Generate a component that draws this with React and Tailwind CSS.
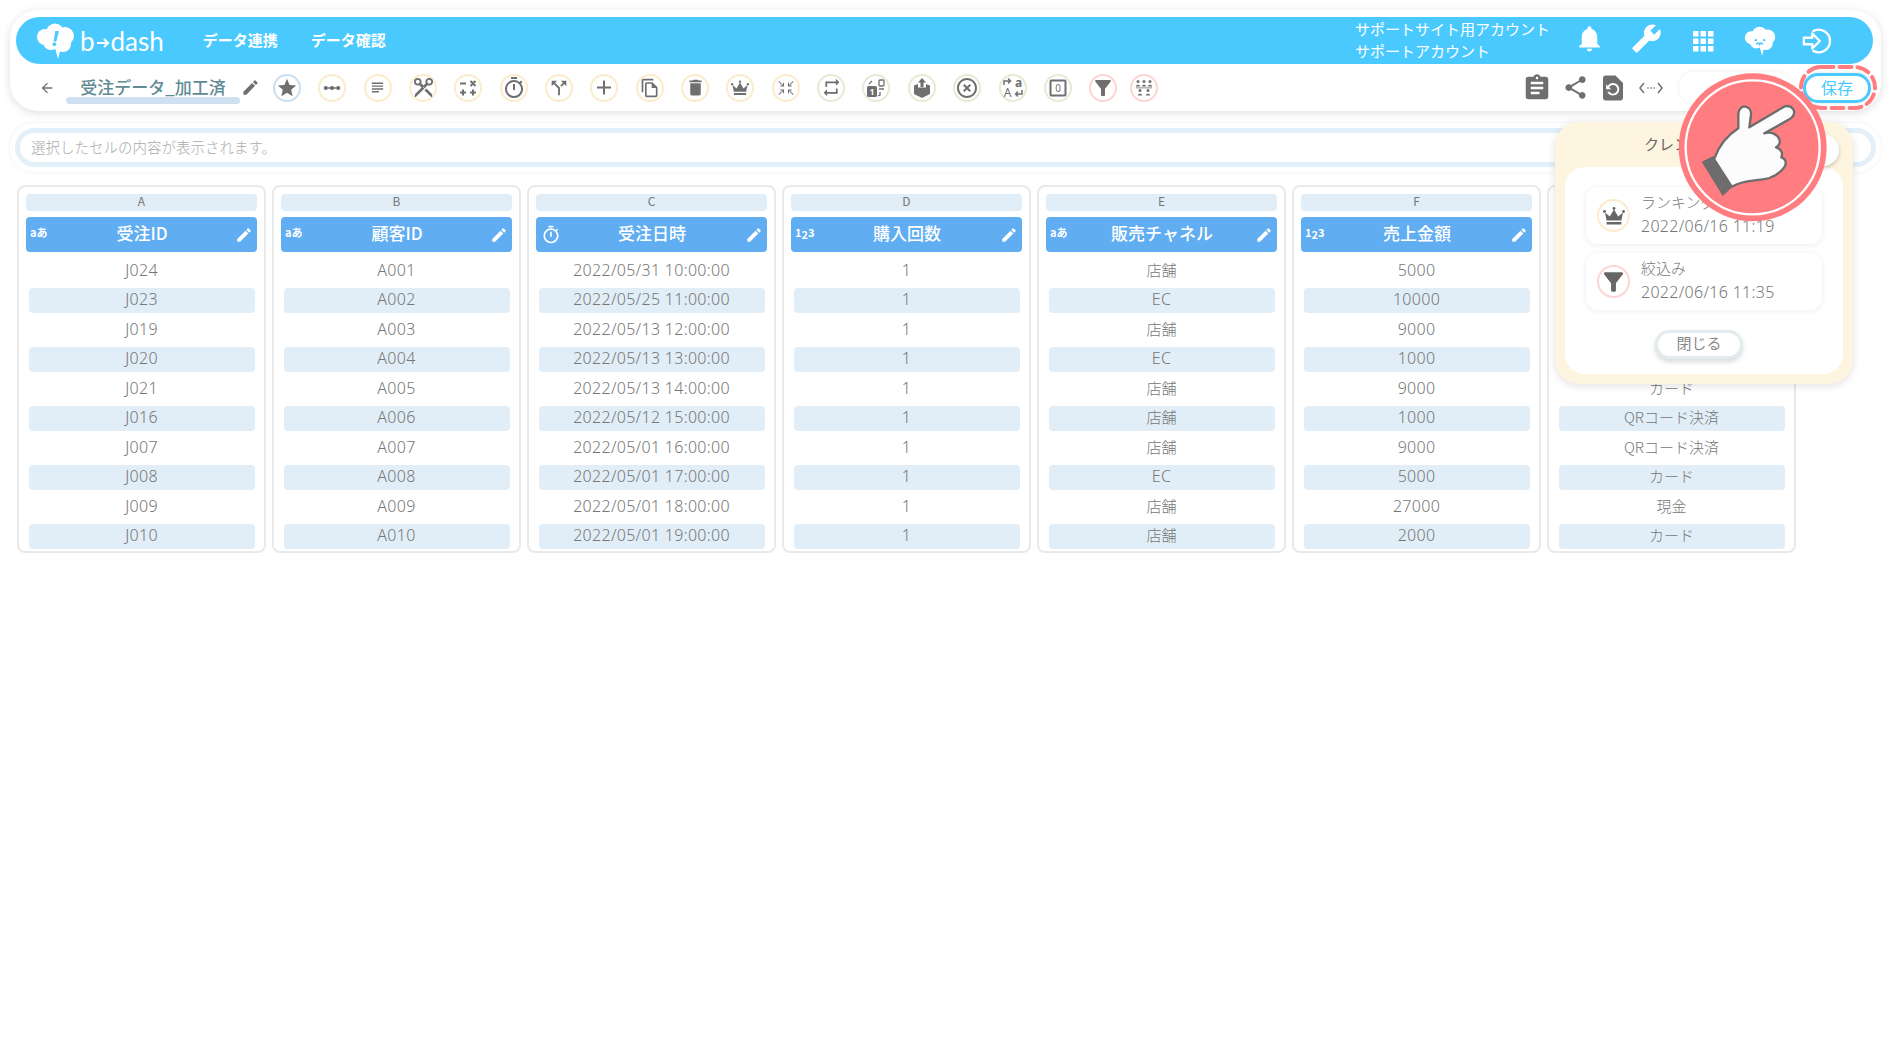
import {
  MdAdd,
  MdArrowBack,
  MdAssignment,
  MdBuild,
  MdCallSplit,
  MdDelete,
  MdEdit,
  MdFilterAlt,
  MdHighlightOff,
  MdLinearScale,
  MdNotifications,
  MdOutlineContentCut,
  MdOutlineFileCopy,
  MdOutlineTimer,
  MdRepeat,
  MdRestorePage,
  MdShare,
  MdStar,
  MdSubject,
} from "react-icons/md";

const Crown = ({ size = 20 }) => (
  <svg width={size} height={size} viewBox="0 0 24 24" fill="currentColor">
    <circle cx="2.5" cy="7.5" r="1.4" />
    <circle cx="12" cy="4.5" r="1.4" />
    <circle cx="21.5" cy="7.5" r="1.4" />
    <path d="M3 8.5l4.8 4L12 5.5l4.2 7 4.8-4-1.6 8H4.6zM4.6 18h14.8v2.4H4.6z" />
  </svg>
);

const Calc = () => (
  <svg width="20" height="20" viewBox="0 0 20 20" stroke="currentColor" strokeWidth="2" fill="none">
    <path d="M2 5.5h6M12.5 3l5 5M17.500 3l-5 5M5 11.500v6M2 14.500h6M15 11.500v6M12 14.500h6" />
  </svg>
);

const Compress = () => (
  <svg width="18" height="18" viewBox="0 0 18 18" fill="currentColor">
    <path d="M2 2l4 4V3.500l1 .5v3.500H3.500L3 6.500h2.500L1.500 3zM16 2l-4 4V3.500l-1 .5v3.500h3.500l.5-1h-2.500l4-3.500zM2 16l4-4v2.500l1-.5v-3.500H3.500l-.5 1h2.500l-4 3.500zM16 16l-4-4v2.500l-1-.5v-3.500h3.500l.5 1h-2.500l4 3.500z" />
  </svg>
);

const LockSwap = () => (
  <svg width="20" height="20" viewBox="0 0 20 20" fill="none">
    <rect x="1" y="8" width="10" height="11" rx="1.500" fill="currentColor" />
    <text x="6" y="16.500" textAnchor="middle" fontSize="8" fontWeight="700" fill="#fff" fontFamily="Noto Sans">1</text>
    <rect x="13" y="2" width="5" height="6" rx="1" stroke="currentColor" strokeWidth="1.300" />
    <path d="M3 6l3-3M14 14v3l-2 1M13 11h5" stroke="currentColor" strokeWidth="1.300" />
  </svg>
);

const BoxUp = () => (
  <svg width="22" height="22" viewBox="0 0 22 22" fill="currentColor">
    <path d="M11 1l4 4.500h-2.500V10h-3V5.500H7z" />
    <path d="M3 8.500l4-1.500v3.500h8V7l4 1.500V17l-8 4-8-4z" />
  </svg>
);

const Translate = () => (
  <svg width="24" height="24" viewBox="0 0 24 24" fill="none">
    <text x="6.500" y="21" textAnchor="middle" fontSize="12" fontFamily="Noto Sans" fill="currentColor">A</text>
    <text x="17.500" y="10.500" textAnchor="middle" fontSize="12" fontWeight="700" fontFamily="Noto Sans" fill="currentColor">a</text>
    <path d="M3 9V5h6M7 2.500L9.500 5 7 7.500M21 14v4h-6M17 15.500L14.500 18l2.500 2.500" stroke="currentColor" strokeWidth="1.500" />
  </svg>
);

const ZeroBox = () => (
  <svg width="20" height="20" viewBox="0 0 20 20" fill="none">
    <rect x="2.500" y="2.500" width="15" height="15" rx="1" stroke="currentColor" strokeWidth="2" />
    <text x="10" y="14" textAnchor="middle" fontSize="10" fontFamily="Noto Sans" fill="currentColor">0</text>
  </svg>
);

const People = () => (
  <svg width="18" height="18" viewBox="0 0 18 18" fill="currentColor">
    {[3, 9, 15].map((x) => (
      <g key={x}>
        <circle cx={x} cy="2.500" r="1.500" />
        <path d={`M${x - 2.2} 7.500c0-2.400 4.400-2.400 4.400 0z`} />
      </g>
    ))}
    <path d="M1 8.500h16v.8H1z" />
    {[5, 13].map((x) => (
      <g key={x}>
        <circle cx={x} cy="11.500" r="1.500" />
        <path d={`M${x - 2.2} 16.500c0-2.400 4.400-2.400 4.400 0z`} />
      </g>
    ))}
  </svg>
);

const Code = () => (
  <svg width="26" height="20" viewBox="0 0 26 20" fill="none" stroke="currentColor" strokeWidth="1.500">
    <path d="M6 5l-4 5 4 5M20 5l4 5-4 5" />
    <path d="M9.500 10h1M12.500 10h1M15.500 10h1" strokeWidth="2" />
  </svg>
);

const Grid = () => (
  <svg width="22" height="22" viewBox="0 0 22 22" fill="currentColor">
    {[1, 8.500, 16].map((x) =>
      [1, 8.500, 16].map((y) => <rect key={`${x}-${y}`} x={x} y={y} width="5.500" height="5.500" />),
    )}
  </svg>
);

const SignIn = () => (
  <svg width="34" height="30" viewBox="0 0 34 30" fill="none" stroke="currentColor" strokeWidth="2.500">
    <path d="M13 4.500a12 12 0 1 1 0 21" strokeLinecap="round" />
    <path d="M3 11.500h9V7l8 8-8 8v-4.500H3z" strokeLinejoin="round" />
  </svg>
);

const Cloud = ({ face }) => (
  <svg width="39" height="36" viewBox="0 0 39 36" fill="#fff">
    <circle cx="9" cy="14" r="8" />
    <circle cx="19" cy="9.500" r="9" />
    <circle cx="29" cy="13" r="9" />
    <circle cx="27" cy="21" r="8" />
    <circle cx="15" cy="19" r="8" />
    <path d="M19 25h6l-3 11z" />
    {face ? (
      <path d="M13 17h3M23 17h3M15 22c3-2 3-2 4 0 1-2 1-2 4 0" stroke="#4ac9ff" strokeWidth="2" fill="none" />
    ) : (
      <text x="19" y="23" textAnchor="middle" fontSize="21" fontWeight="700" fontStyle="italic" fontFamily="Noto Sans" fill="#4ac9ff">!</text>
    )}
  </svg>
);

const tools = [
  { ring: "border-[#c9dff1]", icon: <MdStar size={22} /> },
  { ring: "border-[#fbeccb]", icon: <MdLinearScale size={20} /> },
  { ring: "border-[#fbeccb]", icon: <MdSubject size={17} /> },
  { ring: "border-[#fbeccb]", icon: <MdOutlineContentCut size={23} className="rotate-90" /> },
  { ring: "border-[#fbeccb]", icon: <Calc /> },
  { ring: "border-[#fbeccb]", icon: <MdOutlineTimer size={24} /> },
  { ring: "border-[#fbeccb]", icon: <MdCallSplit size={22} /> },
  { ring: "border-[#fbeccb]", icon: <MdAdd size={25} /> },
  { ring: "border-[#fbeccb]", icon: <MdOutlineFileCopy size={20} /> },
  { ring: "border-[#fbeccb]", icon: <MdDelete size={21} /> },
  { ring: "border-[#fbeccb]", icon: <Crown /> },
  { ring: "border-[#fbeccb]", icon: <Compress /> },
  { ring: "border-[#e4ecd5]", icon: <MdRepeat size={21} /> },
  { ring: "border-[#e4ecd5]", icon: <LockSwap /> },
  { ring: "border-[#e4ecd5]", icon: <BoxUp /> },
  { ring: "border-[#e4ecd5]", icon: <MdHighlightOff size={24} /> },
  { ring: "border-[#e4ecd5]", icon: <Translate /> },
  { ring: "border-[#e4ecd5]", icon: <ZeroBox /> },
  { ring: "border-[#fdd5d5]", icon: <MdFilterAlt size={26} /> },
];

const dates = [
  "2022/05/31 10:00:00",
  "2022/05/25 11:00:00",
  "2022/05/13 12:00:00",
  "2022/05/13 13:00:00",
  "2022/05/13 14:00:00",
  "2022/05/12 15:00:00",
  "2022/05/01 16:00:00",
  "2022/05/01 17:00:00",
  "2022/05/01 18:00:00",
  "2022/05/01 19:00:00",
];

const columns = [
  { letter: "A", title: "受注ID", type: "text", rows: ["J024", "J023", "J019", "J020", "J021", "J016", "J007", "J008", "J009", "J010"] },
  { letter: "B", title: "顧客ID", type: "text", rows: ["A001", "A002", "A003", "A004", "A005", "A006", "A007", "A008", "A009", "A010"] },
  { letter: "C", title: "受注日時", type: "date", rows: dates },
  { letter: "D", title: "購入回数", type: "num", rows: ["1", "1", "1", "1", "1", "1", "1", "1", "1", "1"] },
  { letter: "E", title: "販売チャネル", type: "text", rows: ["店舗", "EC", "店舗", "EC", "店舗", "店舗", "店舗", "EC", "店舗", "店舗"] },
  { letter: "F", title: "売上金額", type: "num", rows: ["5000", "10000", "9000", "1000", "9000", "1000", "9000", "5000", "27000", "2000"] },
  { letter: "G", title: "決済方法", type: "text", rows: ["カード", "現金", "カード", "現金", "カード", "QRコード決済", "QRコード決済", "カード", "現金", "カード"] },
];

function TypeMark({ type }) {
  if (type === "date") return <MdOutlineTimer size={20} />;
  if (type === "num") {
    return (
      <span className="-ml-px -mt-1 text-[11px] font-bold leading-none">
        1<span className="inline-block translate-y-[2px]">2</span>3
      </span>
    );
  }
  return <span className="-ml-px -mt-1 text-[11px] font-bold leading-none">aあ</span>;
}

function Column({ col }) {
  return (
    <div className="w-[249px] shrink-0 rounded-lg border-2 border-[#e9e9e9] bg-white px-[7px] pt-[7px]">
      <div className="flex h-[17px] items-center justify-center rounded-sm bg-[#e1eef8] pb-[3px] text-xs leading-none text-[#777]">
        {col.letter}
      </div>
      <div className="mt-[6px] flex h-[35px] items-center rounded bg-[#60adf2] pl-[5px] pr-[4px] text-white">
        <div className="flex w-[28px] items-center">
          <TypeMark type={col.type} />
        </div>
        <div className="flex-1 pb-[3px] text-center text-[17px] font-medium">{col.title}</div>
        <div className="flex w-[28px] justify-end">
          <MdEdit size={18} />
        </div>
      </div>
      <div className="mt-1">
        {col.rows.map((value, i) => (
          <div key={i} className="flex h-[29.5px] items-center">
            <div
              className={`mx-[2.500px] flex h-[25px] w-full items-center justify-center rounded pb-[2px] font-light text-[#777] ${
                /^[\x00-\x7f]+$/.test(value)
                  ? "font-['Noto_Sans','Noto_Sans_CJK_JP',sans-serif] text-[16px] tracking-[0.3px]"
                  : "text-[15px]"
              } ${i % 2 === 1 ? "bg-[#e1eef8]" : ""}`}
            >
              {value}
            </div>
          </div>
        ))}
      </div>
    </div>
  );
}

function HistoryItem({ ring, icon, label, date }) {
  return (
    <div className="flex h-[57px] items-center rounded-xl bg-white pl-[11px] shadow-[0_1px_6px_rgba(0,0,0,0.08)]">
      <div className={`flex h-[33px] w-[33px] items-center justify-center rounded-full border-2 bg-white text-[#666] ${ring}`}>
        {icon}
      </div>
      <div className="-mt-[4px] ml-[11px] text-[15px] font-light leading-[24px] text-[#777]">
        <div>{label}</div>
        <div className="font-['Noto_Sans','Noto_Sans_CJK_JP',sans-serif] text-[16px] tracking-[0.3px]">{date}</div>
      </div>
    </div>
  );
}

export default function App() {
  return (
    <div className="relative h-[1063px] overflow-hidden bg-white pl-[10px] pr-[9px] pt-[10px] font-['Noto_Sans_CJK_JP','Noto_Sans',sans-serif]">
      {/* header card */}
      <div className="rounded-[28px] bg-white pl-[6px] pr-[8px] pt-[7px] shadow-[0_2px_10px_rgba(0,0,0,0.13)]">
        <div className="flex h-[47px] items-center rounded-full bg-[#4ac9ff] pl-[20px] pr-[40px] text-white">
          <Cloud />
          <div className="ml-[5px] flex items-center font-['Lato',sans-serif] text-[26px] leading-none">
            b
            <svg width="14" height="12" viewBox="0 0 14 12" fill="none" stroke="#fff" strokeWidth="2" className="mx-px mt-1">
              <path d="M1 6h11M8 2l4 4-4 4" />
            </svg>
            dash
          </div>
          <div className="ml-[39px] flex gap-[33px] text-[15px] font-bold">
            <span>データ連携</span>
            <span>データ確認</span>
          </div>
          <div className="ml-auto pb-[2px] text-[15px] leading-[22px]">
            <div>サポートサイト用アカウント</div>
            <div>サポートアカウント</div>
          </div>
          <div className="ml-[23px] flex gap-[25px]">
            <div className="flex w-[32px] justify-center"><MdNotifications size={31} /></div>
            <div className="flex w-[32px] justify-center"><MdBuild size={31} className="-scale-x-100" /></div>
            <div className="flex w-[32px] items-center justify-center"><Grid /></div>
            <div className="flex w-[32px] items-center justify-center"><Cloud face /></div>
            <div className="flex w-[32px] items-center justify-center"><SignIn /></div>
          </div>
        </div>

        {/* toolbar */}
        <div className="flex h-[47px] items-center text-[#6f6f6f]">
          <MdArrowBack size={16} className="ml-[23px]" />
          <div className="ml-[11px] mt-[5px] w-[174px] text-center">
            <div className="text-[17px] font-medium leading-[19px] text-[#5f8b96]">受注データ_加工済</div>
            <div className="mt-px h-[7px] rounded-full bg-[#cfe1f0]" />
          </div>
          <MdEdit size={19} className="ml-px" />
          <div className="ml-[13px] flex gap-[17.350px]">
            {tools.map((tool, i) => (
              <div key={i} className={`flex h-[28px] w-[28px] items-center justify-center rounded-full border-2 ${tool.ring}`}>
                {tool.icon}
              </div>
            ))}
          </div>
          <div className="ml-[13px] flex h-[28px] w-[28px] items-center justify-center rounded-full border-2 border-[#fdd5d5]">
            <People />
          </div>
          <div className="ml-auto flex items-center gap-[8px]">
            <div className="flex w-[30px] justify-center"><MdAssignment size={30} /></div>
            <div className="flex w-[30px] justify-center"><MdShare size={27} /></div>
            <div className="flex w-[30px] justify-center"><MdRestorePage size={30} /></div>
            <div className="flex w-[30px] justify-center"><Code /></div>
          </div>
          <div className="ml-[13px] h-[31px] w-[112px] rounded-full bg-white shadow-[0_0_5px_rgba(0,0,0,0.08)]" />
          <button className="ml-[12px] mr-[2px] flex h-[30px] w-[68px] items-center justify-center rounded-full border-[3px] border-[#4ac9ff] bg-white pb-px text-[16px] text-[#4ac9ff] shadow-[0_0_4px_rgba(0,0,0,0.1)]">
            保存
          </button>
        </div>
      </div>

      {/* formula bar */}
      <div className="mt-[12px] h-[49px] rounded-full bg-white p-[5px] shadow-[0_0_5px_rgba(0,0,0,0.06)]">
        <div className="flex h-[39px] items-center rounded-full border-[5px] border-[#e3f0fa] pb-px pl-[11px] text-[14.500px] font-light text-[#aaa]">
          選択したセルの内容が表示されます。
        </div>
      </div>

      {/* table */}
      <div className="mt-[13px] flex gap-[6px] pl-[7px]">
        {columns.map((col) => (
          <Column key={col.letter} col={col} />
        ))}
      </div>

      {/* cleansing history popup */}
      <div className="absolute left-[1555px] top-[122px] h-[262px] w-[298px] rounded-[24px] bg-[#fdf5e0] px-[10px] shadow-[0_2px_8px_rgba(0,0,0,0.12)]">
        <div className="flex h-[45px] items-center justify-center text-[15px] text-[#666]">クレンジング履歴</div>
        <div className="h-[207px] rounded-[20px] bg-white px-[21px] pt-[20px]">
          <div className="flex flex-col gap-[9px]">
            <HistoryItem
              ring="border-[#fbeccb]"
              icon={<Crown size={24} />}
              label="ランキング"
              date="2022/06/16 11:19"
            />
            <HistoryItem
              ring="border-[#fdd5d5]"
              icon={<MdFilterAlt size={30} />}
              label="絞込み"
              date="2022/06/16 11:35"
            />
          </div>
          <button className="ml-[69px] mt-[20px] flex h-[29px] w-[88px] items-center justify-center rounded-full border-[3px] border-[#e2ebee] bg-white pb-[2px] text-[15px] text-[#888] shadow-[0_3px_5px_rgba(0,0,0,0.15)]">
            閉じる
          </button>
        </div>
        <div className="absolute right-[14px] top-[12px] h-[32px] w-[32px] rounded-full bg-white shadow-[0_2px_4px_rgba(0,0,0,0.2)]" />
      </div>

      {/* dashed highlight around save */}
      <svg className="absolute left-[1798px] top-[64px]" width="80" height="47" viewBox="0 0 80 47" fill="none">
        <rect x="3" y="3" width="74" height="41" rx="20.500" stroke="#ff7d80" strokeWidth="4" strokeDasharray="12 6" strokeLinecap="round" />
      </svg>

      {/* pointing hand */}
      <svg className="absolute left-[1670px] top-[70px]" width="165" height="160" viewBox="0 0 495 480">
        <circle cx="248" cy="232" r="222" fill="#ff7d80" />
        <circle cx="248" cy="232" r="201" fill="none" stroke="#fff" strokeWidth="7" />
        <path
          d="M132 268C146 228 172 196 205 175L205 132C206 114 218 108 226 110C238 112 244 122 243 134L238 172L342 110C356 104 368 112 372 122C374 132 368 142 358 148L283 190C304 184 322 192 328 208C332 220 326 228 318 232C332 236 340 248 334 262C348 266 350 280 344 290C334 306 318 316 298 324C268 334 226 326 185 350Z"
          fill="#fcfcfc"
          stroke="#6d6d6d"
          strokeWidth="7"
          strokeLinejoin="round"
        />
        <path d="M95 275L130 258L188 350L158 378Z" fill="#6d6d6d" />
      </svg>
    </div>
  );
}
